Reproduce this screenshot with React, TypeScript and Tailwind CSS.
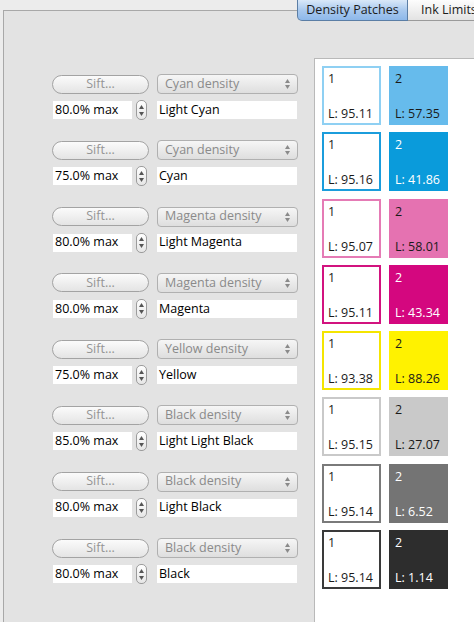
import React from "react";

type Row = {
  pct: string;
  name: string;
  density: string;
  l1: string;
  l2: string;
  border: string;
  fill: string;
  light: boolean;
};

const rows: Row[] = [
  { pct: "80.0% max", name: "Light Cyan", density: "Cyan density", l1: "95.11", l2: "57.35", border: "#8fd0f3", fill: "#66bbec", light: false },
  { pct: "75.0% max", name: "Cyan", density: "Cyan density", l1: "95.16", l2: "41.86", border: "#1b9ddc", fill: "#0a9bdb", light: true },
  { pct: "80.0% max", name: "Light Magenta", density: "Magenta density", l1: "95.07", l2: "58.01", border: "#e57bb5", fill: "#e572b1", light: false },
  { pct: "80.0% max", name: "Magenta", density: "Magenta density", l1: "95.11", l2: "43.34", border: "#d2137f", fill: "#d4077f", light: true },
  { pct: "75.0% max", name: "Yellow", density: "Yellow density", l1: "93.38", l2: "88.26", border: "#f4e500", fill: "#fff200", light: false },
  { pct: "85.0% max", name: "Light Light Black", density: "Black density", l1: "95.15", l2: "27.07", border: "#c9c9c9", fill: "#c9c9c9", light: false },
  { pct: "80.0% max", name: "Light Black", density: "Black density", l1: "95.14", l2: "6.52", border: "#7a7a7a", fill: "#747474", light: true },
  { pct: "80.0% max", name: "Black", density: "Black density", l1: "95.14", l2: "1.14", border: "#3a3a3a", fill: "#2d2d2d", light: true },
];

const font = { fontFamily: '"Open Sans", "DejaVu Sans", sans-serif' };

function Stepper() {
  return (
    <div className="w-[11px] h-[20px] rounded-[5px] border border-[#9c9c9c] bg-gradient-to-b from-white to-[#e6e6e6] flex flex-col items-center justify-center gap-[3px]">
      <svg width="5" height="4" viewBox="0 0 5 4"><path d="M2.5 0 L5 4 L0 4 Z" fill="#555" /></svg>
      <svg width="5" height="4" viewBox="0 0 5 4"><path d="M0 0 L5 0 L2.5 4 Z" fill="#555" /></svg>
    </div>
  );
}

function PopArrows() {
  return (
    <div className="flex flex-col items-center gap-[2px]">
      <svg width="5" height="4" viewBox="0 0 5 4"><path d="M2.5 0 L5 4 L0 4 Z" fill="#8a8a8a" /></svg>
      <svg width="5" height="4" viewBox="0 0 5 4"><path d="M0 0 L5 0 L2.5 4 Z" fill="#8a8a8a" /></svg>
    </div>
  );
}

function ControlRow({ r }: { r: Row }) {
  return (
    <div className="h-[66.3px] pt-[7px] pl-[48px] flex flex-col gap-[6px]">
      <div className="flex items-center">
        <div className="w-[97px] h-[19px] rounded-full border border-[#a3a3a3] bg-gradient-to-b from-[#fbfbfb] to-[#e4e4e4] flex items-center justify-center text-[12.5px] text-[#949494]">
          Sift...
        </div>
        <div className="ml-[8px] w-[141px] h-[20px] rounded-[4px] border border-[#b0b0b0] bg-gradient-to-b from-[#f6f6f6] to-[#dedede] flex items-center justify-between pl-[7px] pr-[7px] text-[12.5px] text-[#8a8a8a]">
          <span>{r.density}</span>
          <PopArrows />
        </div>
      </div>
      <div className="flex items-center">
        <div className="ml-[1px] w-[79px] h-[18px] bg-white flex items-center pl-[2px] text-[12.5px] text-black">
          {r.pct}
        </div>
        <div className="ml-[4px]">
          <Stepper />
        </div>
        <div className="ml-[10px] w-[140px] h-[18px] bg-white flex items-center pl-[2px] text-[12.5px] text-black">
          {r.name}
        </div>
      </div>
    </div>
  );
}

function PatchRow({ r }: { r: Row }) {
  const tc = r.light ? "text-white" : "text-[#1a1a1a]";
  return (
    <div className="h-[66.3px] flex gap-[8px] pl-[7px]">
      <div
        className="w-[59px] h-[59px] bg-white border-[2px] flex flex-col justify-between pl-[4px] pt-[4px] pb-[2px] text-[12.5px] text-[#1a1a1a]"
        style={{ borderColor: r.border }}
      >
        <span className="leading-[14px]">1</span>
        <span className="leading-[14px]">L: {r.l1}</span>
      </div>
      <div
        className={`w-[59px] h-[59px] flex flex-col justify-between pl-[6px] pt-[6px] pb-[4px] text-[12.5px] ${tc}`}
        style={{ backgroundColor: r.fill }}
      >
        <span className="leading-[14px]">2</span>
        <span className="leading-[14px]">L: {r.l2}</span>
      </div>
    </div>
  );
}

export default function App() {
  return (
    <div className="relative w-[474px] h-[622px] overflow-hidden bg-[#ececec]" style={font}>
      <div className="mt-[10px] ml-[3px] h-[612px] border-t border-l border-[#a8a8a8] bg-[#e3e3e3] flex">
        <div className="w-[310px] pt-[56px] flex flex-col">
          {rows.map((r) => (
            <ControlRow key={r.name} r={r} />
          ))}
        </div>
        <div className="mt-[47px] flex-1 bg-white border-l border-t border-[#b9b9b9] pt-[7px] flex flex-col">
          {rows.map((r) => (
            <PatchRow key={r.name} r={r} />
          ))}
        </div>
      </div>
      <div className="absolute top-0 left-[297px] h-[21px] flex text-[12.5px]">
        <div className="w-[111px] h-full rounded-bl-[5px] border border-t-0 border-[#5b7ea5] bg-gradient-to-b from-[#d9e8f8] via-[#a9c9ee] to-[#8db8ea] flex items-center justify-center text-[#1c1c1c]">
          Density Patches
        </div>
        <div className="w-[80px] h-full border-b border-[#9a9a9a] bg-gradient-to-b from-[#fdfdfd] to-[#e3e3e3] flex items-center pl-[13px] text-[#1c1c1c] whitespace-nowrap">
          Ink Limits
        </div>
      </div>
    </div>
  );
}
